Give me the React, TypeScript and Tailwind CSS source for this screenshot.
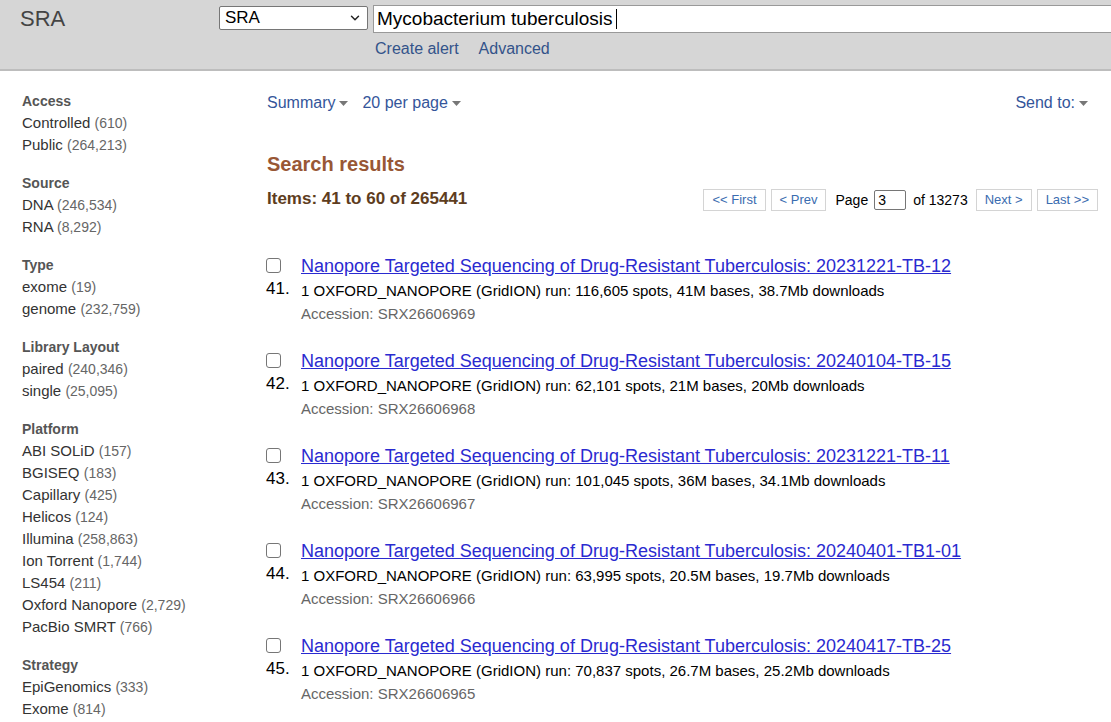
import { ChevronDown } from "lucide-react";

const facets = [
  { title: "Access", items: [["Controlled", "610"], ["Public", "264,213"]] },
  { title: "Source", items: [["DNA", "246,534"], ["RNA", "8,292"]] },
  { title: "Type", items: [["exome", "19"], ["genome", "232,759"]] },
  { title: "Library Layout", items: [["paired", "240,346"], ["single", "25,095"]] },
  {
    title: "Platform",
    items: [
      ["ABI SOLiD", "157"],
      ["BGISEQ", "183"],
      ["Capillary", "425"],
      ["Helicos", "124"],
      ["Illumina", "258,863"],
      ["Ion Torrent", "1,744"],
      ["LS454", "211"],
      ["Oxford Nanopore", "2,729"],
      ["PacBio SMRT", "766"],
    ],
  },
  { title: "Strategy", items: [["EpiGenomics", "333"], ["Exome", "814"]] },
];

const results = [
  { n: 41, tag: "20231221-TB-12", spots: "116,605", bases: "41M", dl: "38.7Mb", acc: "SRX26606969" },
  { n: 42, tag: "20240104-TB-15", spots: "62,101", bases: "21M", dl: "20Mb", acc: "SRX26606968" },
  { n: 43, tag: "20231221-TB-11", spots: "101,045", bases: "36M", dl: "34.1Mb", acc: "SRX26606967" },
  { n: 44, tag: "20240401-TB1-01", spots: "63,995", bases: "20.5M", dl: "19.7Mb", acc: "SRX26606966" },
  { n: 45, tag: "20240417-TB-25", spots: "70,837", bases: "26.7M", dl: "25.2Mb", acc: "SRX26606965" },
];

const Caret = () => (
  <svg width="9" height="5" viewBox="0 0 9 5" className="ml-[4px] inline-block">
    <path d="M0 0h9L4.5 5z" fill="#777" />
  </svg>
);

const PageBtn = ({ label }: { label: string }) => (
  <span className="border border-[#d4d4d4] px-[8px] h-[22px] flex items-center text-[13px] text-[#3a6cb0]">
    {label}
  </span>
);

export default function App() {
  return (
    <div className="min-h-screen bg-white text-[#333] overflow-hidden" style={{ fontFamily: '"Liberation Sans", Arial, sans-serif' }}>
      <header className="h-[71px] bg-[#d6d6d6] border-b-[2px] border-[#bdbdbd] flex">
        <div className="w-[219px] pl-[20px] pt-[2px] text-[22px] text-[#444]">SRA</div>
        <div className="flex-1 flex flex-col">
          <div className="flex items-start pt-[5px]">
            <div className="mt-[1px] w-[149px] h-[24px] bg-white border border-[#767676] rounded-[2px] flex items-center justify-between px-[5px] text-[17px] text-black">
              <span>SRA</span>
              <ChevronDown size={14} strokeWidth={2.5} color="#222" />
            </div>
            <div className="ml-[5px] flex-1 h-[28px] bg-white border-y border-l border-[#999] flex items-center pl-[3px] text-[19px] text-black">
              Mycobacterium tuberculosis <span className="ml-[4px] w-[1px] h-[20px] bg-black" />
            </div>
          </div>
          <div className="flex gap-[20px] pl-[156px] pt-[4px] text-[16px] text-[#33538a]">
            <span>Create alert</span>
            <span>Advanced</span>
          </div>
        </div>
      </header>

      <div className="flex">
        <aside className="w-[266px] pl-[22px] pt-[19px] text-[15px] shrink-0">
          {facets.map((f) => (
            <div key={f.title} className="mb-[16px]">
              <div className="font-bold text-[#555] text-[14px] leading-[22px]">{f.title}</div>
              {f.items.map(([name, count]) => (
                <div key={name} className="leading-[22px] h-[22px] text-[#333]">
                  {name} <span className="text-[#666] text-[14px] leading-[22px]">({count})</span>
                </div>
              ))}
            </div>
          ))}
        </aside>

        <main className="flex-1 pr-[13px] pt-[22px]">
          <div className="flex justify-between items-center h-[20px] text-[16px] text-[#34559a]">
            <div className="flex items-center gap-[14px] pl-[1px]">
              <span className="flex items-center">Summary<Caret /></span>
              <span className="flex items-center">20 per page<Caret /></span>
            </div>
            <span className="flex items-center pr-[10px]">Send to:<Caret /></span>
          </div>

          <h2 className="mt-[39px] text-[20px] font-bold text-[#985735] leading-[24px] pl-[1px]">Search results</h2>
          <div className="flex justify-between items-center mt-[11px]">
            <div className="text-[17px] font-bold text-[#5e3d1e] leading-[20px] pl-[1px]">Items: 41 to 60 of 265441</div>
            <div className="flex items-center gap-[5px] text-[14px] text-black mt-[2px]">
              <PageBtn label="<< First" />
              <PageBtn label="< Prev" />
              <span className="ml-[4px]">Page</span>
              <span className="ml-[1px] w-[32px] h-[20px] border border-[#767676] rounded-[2px] flex items-center pl-[3px]">3</span>
              <span className="ml-[2px] mr-[3px]">of 13273</span>
              <PageBtn label="Next >" />
              <PageBtn label="Last >>" />
            </div>
          </div>

          <div className="mt-[44px] flex flex-col gap-[26px]">
            {results.map((r) => (
              <div key={r.n} className="flex">
                <div className="w-[35px] shrink-0 flex flex-col">
                  <span className="w-[15px] h-[15px] border-[1.5px] border-[#767676] rounded-[3px] mt-[3px]" />
                  <span className="text-[17px] text-black mt-[6px] leading-[20px]">{r.n}.</span>
                </div>
                <div className="flex flex-col">
                  <a className="text-[18px] text-[#2a2ad0] underline leading-[22px]">
                    Nanopore Targeted Sequencing of Drug-Resistant Tuberculosis: {r.tag}
                  </a>
                  <span className="text-[15px] text-black leading-[20px] mt-[4px]">
                    1 OXFORD_NANOPORE (GridION) run: {r.spots} spots, {r.bases} bases, {r.dl} downloads
                  </span>
                  <span className="text-[15px] text-[#666] leading-[20px] mt-[3px]">Accession: {r.acc}</span>
                </div>
              </div>
            ))}
          </div>
        </main>
      </div>
    </div>
  );
}
